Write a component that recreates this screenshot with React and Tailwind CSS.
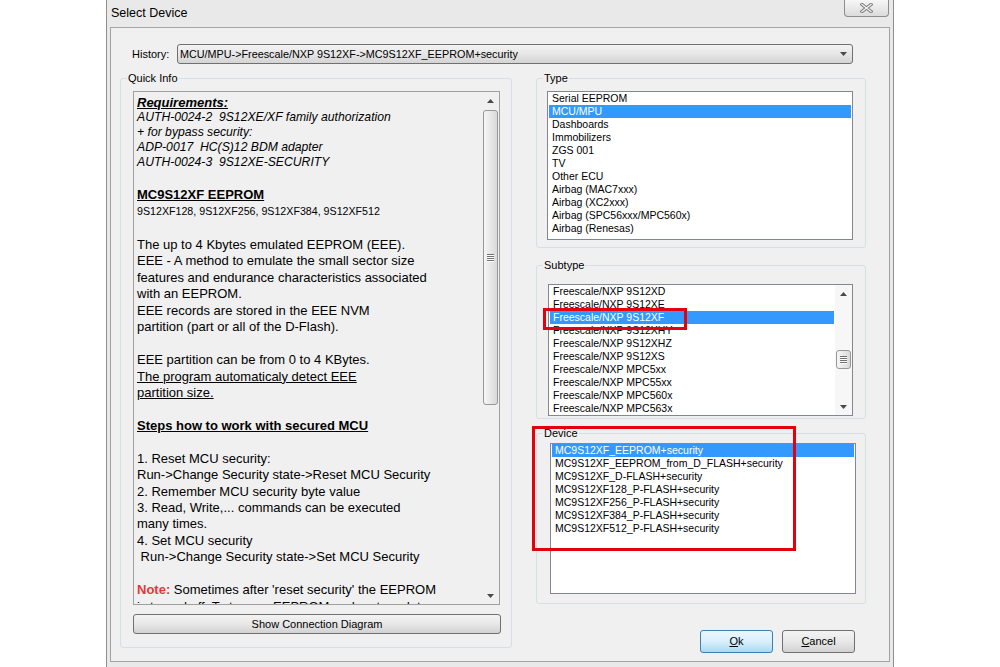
import React from "react";

const ui = { fontFamily: '"Liberation Sans", Arial, sans-serif' };

const typeItems = [
  "Serial EEPROM",
  "MCU/MPU",
  "Dashboards",
  "Immobilizers",
  "ZGS 001",
  "TV",
  "Other ECU",
  "Airbag (MAC7xxx)",
  "Airbag (XC2xxx)",
  "Airbag (SPC56xxx/MPC560x)",
  "Airbag (Renesas)",
];

const subtypeItems = [
  "Freescale/NXP 9S12XD",
  "Freescale/NXP 9S12XE",
  "Freescale/NXP 9S12XF",
  "Freescale/NXP 9S12XHY",
  "Freescale/NXP 9S12XHZ",
  "Freescale/NXP 9S12XS",
  "Freescale/NXP MPC5xx",
  "Freescale/NXP MPC55xx",
  "Freescale/NXP MPC560x",
  "Freescale/NXP MPC563x",
];

const deviceItems = [
  "MC9S12XF_EEPROM+security",
  "MC9S12XF_EEPROM_from_D_FLASH+security",
  "MC9S12XF_D-FLASH+security",
  "MC9S12XF128_P-FLASH+security",
  "MC9S12XF256_P-FLASH+security",
  "MC9S12XF384_P-FLASH+security",
  "MC9S12XF512_P-FLASH+security",
];

function Arrow({ up }) {
  return (
    <svg width="7" height="4" viewBox="0 0 7 4">
      <path d={up ? "M0 4 L3.5 0 L7 4 Z" : "M0 0 L3.5 4 L7 0 Z"} fill="#4a4a4a" />
    </svg>
  );
}

function Grip() {
  return (
    <div className="flex flex-col">
      {[0, 1, 2, 3].map((i) => (
        <div key={i}>
          <div className="w-[7px] h-[1px] bg-[#707070]" />
          <div className="w-[7px] h-[1px] bg-white" />
        </div>
      ))}
    </div>
  );
}

function GroupBox({ label, className, children }) {
  return (
    <div className={`relative border border-[#d5dfe5] rounded-[3px] ${className}`}>
      <span className="absolute -top-[8px] left-[6px] px-[1px] bg-[#f0f0f0] text-[11px] leading-[14px] text-black">
        {label}
      </span>
      {children}
    </div>
  );
}

function Items({ items, selected }) {
  return (
    <div className="px-[1px]">
      {items.map((it, i) => (
        <div
          key={it}
          className={`h-[13px] leading-[13px] pl-[3px] text-[10.5px] whitespace-nowrap ${
            i === selected ? "bg-[#3399ff] text-white" : "text-black"
          }`}
        >
          {it}
        </div>
      ))}
    </div>
  );
}

const Line = ({ children, className = "" }) => (
  <div className={`h-[16.45px] whitespace-pre ${className}`}>{children}</div>
);

export default function App() {
  return (
    <div className="w-[1000px] h-[667px] bg-white relative overflow-hidden" style={ui}>
      <div className="ml-[106px] w-[788px] h-[667px] border-x border-[#8e8f8f] bg-[#e9e9e9] flex flex-col">
        {/* Title bar */}
        <div className="h-[27px] flex items-start shrink-0">
          <span className="pl-[4px] pt-[5px] text-[12.5px] leading-[16px] text-black">Select Device</span>
          <div className="ml-auto mr-[4px] w-[45px] h-[17px] border border-t-0 border-[#8d8d8d] rounded-b-[4px] bg-gradient-to-b from-[#f7f7f7] to-[#dcdcdc] flex items-center justify-center">
            <svg width="13" height="10" viewBox="0 0 13 10">
              <path d="M2 1.5 L11 8.5 M11 1.5 L2 8.5" stroke="#7d7d7d" strokeWidth="3.4" strokeLinecap="square" />
              <path d="M2 1.5 L11 8.5 M11 1.5 L2 8.5" stroke="#f2f2f2" strokeWidth="1.4" strokeLinecap="square" />
            </svg>
          </div>
        </div>

        {/* Client area */}
        <div className="ml-[3px] w-[780px] h-[635px] border border-[#a3a3a3] bg-[#f0f0f0] flex flex-col shrink-0">
          {/* History */}
          <div className="mt-[16px] h-[20px] flex items-center pl-[21px]">
            <span className="w-[45px] text-[11px] text-black">History:</span>
            <div className="w-[676px] h-[20px] border border-[#707070] rounded-[3px] bg-gradient-to-b from-[#f4f4f4] via-[#e6e6e6] to-[#d4d4d4] flex items-center pl-[2px] pr-[5px]">
              <span className="text-[10.8px] text-black whitespace-nowrap">
                MCU/MPU-&gt;Freescale/NXP 9S12XF-&gt;MC9S12XF_EEPROM+security
              </span>
              <div className="ml-auto">
                <Arrow />
              </div>
            </div>
          </div>

          <div className="mt-[14px] flex items-start">
            {/* Quick Info */}
            <GroupBox label="Quick Info" className="ml-[9px] w-[392px] h-[570px] pl-[12px] pt-[12px]">
              <div className="w-[367px] h-[514px] border border-[#a0a0a0] bg-[#f0f0f0] flex">
                <div className="flex-1 overflow-hidden pl-[3px] pt-[3px] text-black">
                  <div className="h-[15px] leading-[15px] text-[13px] font-bold italic underline">Requirements:</div>
                  <div className="h-[15px] leading-[15px] text-[12.2px] italic whitespace-pre">AUTH-0024-2  9S12XE/XF family authorization</div>
                  <div className="h-[15px] leading-[15px] text-[12.2px] italic">+ for bypass security:</div>
                  <div className="h-[15px] leading-[15px] text-[12.2px] italic whitespace-pre">ADP-0017  HC(S)12 BDM adapter</div>
                  <div className="h-[15px] leading-[15px] text-[12.2px] italic whitespace-pre">AUTH-0024-3  9S12XE-SECURITY</div>
                  <div className="h-[17px]" />
                  <div className="h-[16px] leading-[16px] text-[13px] font-bold underline">MC9S12XF EEPROM</div>
                  <div className="h-[16px] leading-[16px] text-[10.67px]">9S12XF128, 9S12XF256, 9S12XF384, 9S12XF512</div>
                  <div className="h-[18px]" />
                  <div className="text-[13px] leading-[16.45px]">
                    <Line>The up to 4 Kbytes emulated EEPROM (EEE).</Line>
                    <Line>EEE - A method to emulate the small sector size</Line>
                    <Line>features and endurance characteristics associated</Line>
                    <Line>with an EEPROM.</Line>
                    <Line>EEE records are stored in the EEE NVM</Line>
                    <Line>partition (part or all of the D-Flash).</Line>
                    <Line />
                    <Line>EEE partition can be from 0 to 4 KBytes.</Line>
                    <Line className="underline">The program automaticaly detect EEE</Line>
                    <Line className="underline">partition size.</Line>
                    <Line />
                    <Line className="font-bold underline">Steps how to work with secured MCU</Line>
                    <Line />
                    <Line>1. Reset MCU security:</Line>
                    <Line>Run-&gt;Change Security state-&gt;Reset MCU Security</Line>
                    <Line>2. Remember MCU security byte value</Line>
                    <Line>3. Read, Write,... commands can be executed</Line>
                    <Line>many times.</Line>
                    <Line>4. Set MCU security</Line>
                    <Line> Run-&gt;Change Security state-&gt;Set MCU Security</Line>
                    <Line />
                    <Line>
                      <span className="font-bold text-[#e8353a]">Note:</span> Sometimes after 'reset security' the EEPROM
                    </Line>
                    <Line>is turned off. To turn on EEPROM and restore data</Line>
                  </div>
                </div>
                <div className="w-[17px] flex flex-col shrink-0">
                  <div className="h-[17px] flex items-center justify-center">
                    <Arrow up />
                  </div>
                  <div className="mt-[1px] mx-[1px] h-[295px] rounded-[3px] border border-[#979797] bg-gradient-to-r from-[#f6f6f6] to-[#d9d9d9] flex items-center justify-center">
                    <Grip />
                  </div>
                  <div className="flex-1" />
                  <div className="h-[17px] flex items-center justify-center">
                    <Arrow />
                  </div>
                </div>
              </div>
              <div className="mt-[9px] w-[368px] h-[20px] border border-[#707070] rounded-[3px] bg-gradient-to-b from-[#f3f3f3] via-[#e8e8e8] to-[#d2d2d2] flex items-center justify-center text-[11px] text-black">
                Show Connection Diagram
              </div>
            </GroupBox>

            {/* Right column */}
            <div className="ml-[24px] w-[330px] flex flex-col">
              <GroupBox label="Type" className="h-[170px]">
                <div className="ml-[10px] mt-[12px] w-[306px] h-[149px] border border-[#828790] bg-white overflow-hidden">
                  <Items items={typeItems} selected={1} />
                </div>
              </GroupBox>

              <GroupBox label="Subtype" className="mt-[17px] h-[154px]">
                <div className="ml-[11px] mt-[18px] w-[305px] h-[132px] border border-[#828790] bg-white overflow-hidden flex">
                  <div className="flex-1">
                    <Items items={subtypeItems} selected={2} />
                  </div>
                  <div className="w-[17px] flex flex-col bg-[#f7f7f7] shrink-0">
                    <div className="h-[17px] flex items-center justify-center">
                      <Arrow up />
                    </div>
                    <div className="mt-[48px] mx-[1px] h-[19px] rounded-[3px] border border-[#979797] bg-gradient-to-r from-[#f6f6f6] to-[#d9d9d9] flex items-center justify-center">
                      <Grip />
                    </div>
                    <div className="flex-1" />
                    <div className="h-[17px] flex items-center justify-center">
                      <Arrow />
                    </div>
                  </div>
                </div>
              </GroupBox>

              <GroupBox label="Device" className="mt-[14px] h-[171px]">
                <div className="ml-[13px] mt-[9px] w-[306px] h-[151px] border border-[#828790] bg-white overflow-hidden">
                  <Items items={deviceItems} selected={0} />
                </div>
              </GroupBox>

              <div className="mt-[26px] flex justify-end gap-[9px] pr-[11px]">
                <div className="w-[73px] h-[23px] border border-[#3c7fb1] rounded-[3px] bg-gradient-to-b from-[#eaf6fd] via-[#d9f0fc] to-[#a7d9f5] flex items-center justify-center text-[11px] text-black">
                  <span>
                    <span className="underline">O</span>k
                  </span>
                </div>
                <div className="w-[73px] h-[23px] border border-[#707070] rounded-[3px] bg-gradient-to-b from-[#f3f3f3] via-[#e8e8e8] to-[#d2d2d2] flex items-center justify-center text-[11px] text-black">
                  <span>
                    <span className="underline">C</span>ancel
                  </span>
                </div>
              </div>
            </div>
          </div>
        </div>
      </div>

      {/* Red annotation boxes */}
      <div className="absolute left-[543px] top-[308px] w-[144px] h-[22px] border-[3px] border-[#e3000f]" />
      <div className="absolute left-[532px] top-[426px] w-[264px] h-[125px] border-[3px] border-[#e3000f]" />
    </div>
  );
}
